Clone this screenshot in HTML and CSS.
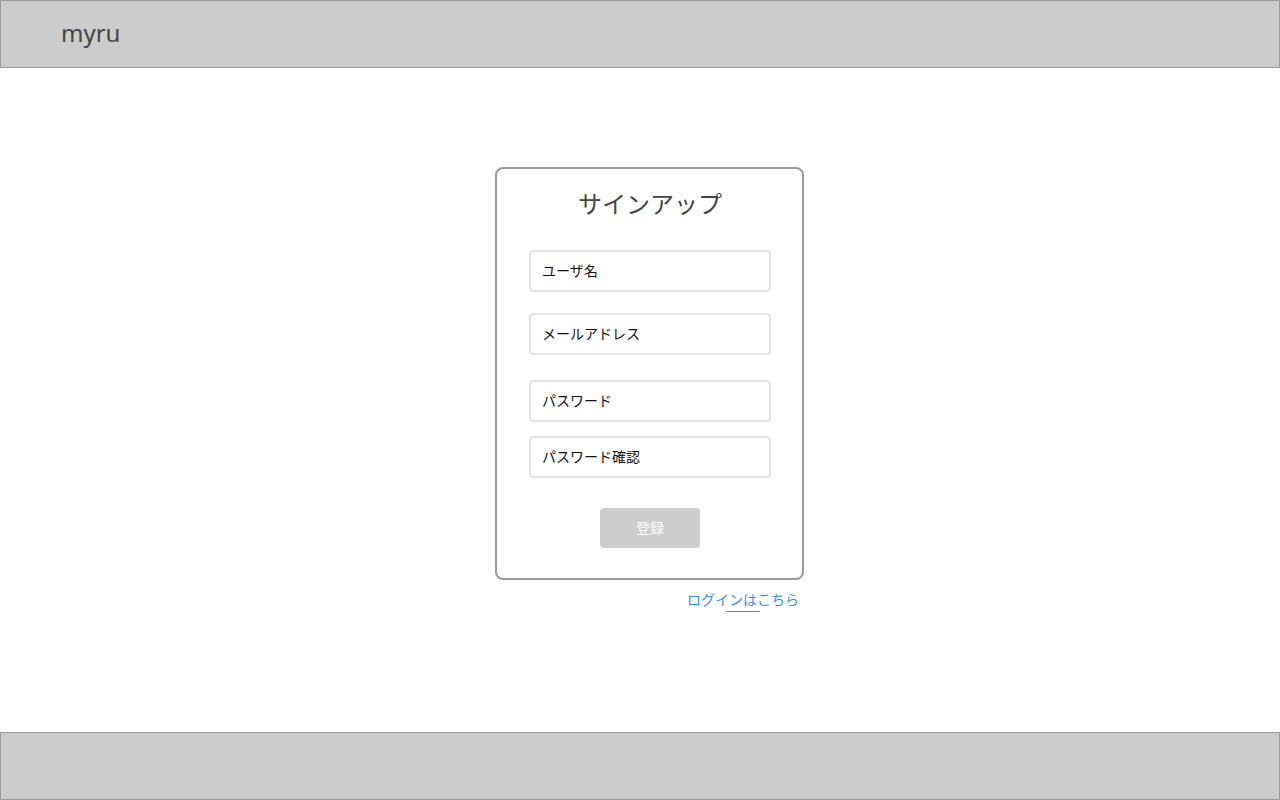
FILE: index.html
```html
<!DOCTYPE html>
<html lang="ja">
<head>
<meta charset="utf-8">
<title>myru</title>
<link rel="stylesheet" href="styles.css">
</head>
<body>
<header class="site-header">
  <div class="brand">myru</div>
</header>
<main class="main">
  <div class="signup">
    <form class="card">
      <h1 class="card-title">サインアップ</h1>
      <input class="field f-user" type="text" placeholder="ユーザ名">
      <input class="field f-mail" type="email" placeholder="メールアドレス">
      <input class="field f-pass" type="password" placeholder="パスワード">
      <input class="field f-conf" type="password" placeholder="パスワード確認">
      <button class="submit" type="button">登録</button>
    </form>
    <div class="login-row">
      <a class="login-link" href="#">ログインはこちら</a>
    </div>
  </div>
</main>
<footer class="site-footer"></footer>
</body>
</html>
```

FILE: styles.css
```css
* { box-sizing: border-box; }
html, body { margin: 0; padding: 0; }
body {
  width: 1280px;
  height: 800px;
  display: flex;
  flex-direction: column;
  font-family: "Noto Sans", "Noto Sans CJK JP", sans-serif;
  background: #fff;
  color: #000;
}
.site-header {
  height: 68px;
  background: #cccccc;
  border: 1px solid #999999;
  display: flex;
  align-items: center;
  padding-left: 60px;
}
.brand {
  font-family: "Noto Sans", "Noto Sans CJK JP", sans-serif;
  font-size: 24px;
  color: #444;
  line-height: 1;
  margin-top: -2px;
}
.main {
  flex: 1;
  display: flex;
  justify-content: center;
  padding-top: 99px;
  padding-left: 19px;
}
.signup {
  width: 309px;
  display: flex;
  flex-direction: column;
}
.card {
  width: 309px;
  border: 2px solid #999999;
  border-radius: 8px;
  display: flex;
  flex-direction: column;
  align-items: center;
  padding: 16px 0 30px 1px;
  margin: 0;
}
.card-title {
  margin: 0 0 29px;
  font-family: "Noto Sans CJK JP", sans-serif;
  font-weight: 400;
  font-size: 24px;
  line-height: 36px;
  color: #444;
}
.field {
  width: 242px;
  height: 42px;
  border: 2px solid #e3e3e3;
  border-radius: 4px;
  padding: 0 11px 2px;
  font-family: "Noto Sans CJK JP", sans-serif;
  font-size: 14px;
  color: #000;
  outline: none;
  background: #fff;
}
.field::placeholder { color: #111; opacity: 1; }
.f-mail { margin-top: 21px; }
.f-pass { margin-top: 25px; }
.f-conf { margin-top: 14px; }
.submit {
  margin-top: 30px;
  width: 100px;
  height: 40px;
  border: none;
  border-radius: 4px;
  background: #cccccc;
  color: #fff;
  font-family: "Noto Sans CJK JP", sans-serif;
  font-size: 14px;
  padding: 0 0 2px;
}
.login-row {
  display: flex;
  justify-content: flex-end;
  margin-top: 9px;
  padding-right: 5px;
}
.login-link {
  position: relative;
  font-family: "Noto Sans CJK JP", sans-serif;
  font-size: 14px;
  line-height: 20px;
  color: #3b8eea;
  text-decoration: none;
}
.login-link::after {
  content: "";
  position: absolute;
  left: 39px;
  top: 22px;
  width: 34px;
  height: 1px;
  background: #3b8eea;
}
.site-footer {
  height: 68px;
  background: #cccccc;
  border: 1px solid #999999;
}
```
